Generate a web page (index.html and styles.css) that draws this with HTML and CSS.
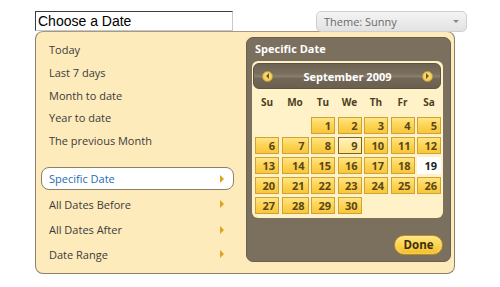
FILE: index.html
```html
<!DOCTYPE html>
<html>
<head>
<meta charset="utf-8">
<link rel="stylesheet" href="styles.css">
</head>
<body>
<div class="page">
  <div class="toprow">
    <div class="dateinput">Choose a Date</div>
    <div class="theme"><span>Theme: Sunny</span><i class="theme-arrow"></i></div>
  </div>
  <div class="popup">
    <div class="menu">
      <div class="group">
        <div class="item">Today</div>
        <div class="item">Last 7 days</div>
        <div class="item">Month to date</div>
        <div class="item">Year to date</div>
        <div class="item">The previous Month</div>
      </div>
      <div class="group group2">
        <div class="item sub active">Specific Date<i class="tri"></i></div>
        <div class="item sub">All Dates Before<i class="tri"></i></div>
        <div class="item sub">All Dates After<i class="tri"></i></div>
        <div class="item sub">Date Range<i class="tri"></i></div>
      </div>
    </div>
    <div class="panel">
      <div class="panel-title">Specific Date</div>
      <div class="cal">
        <div class="cal-head">
          <span class="nav prev"><i></i></span>
          <span class="month">September 2009</span>
          <span class="nav next"><i></i></span>
        </div>
        <div class="grid names">
          <span>Su</span><span>Mo</span><span>Tu</span><span>We</span><span>Th</span><span>Fr</span><span>Sa</span>
        </div>
        <div class="grid days">
          <span class="empty"></span><span class="empty"></span>
          <span class="d">1</span><span class="d">2</span><span class="d">3</span><span class="d">4</span><span class="d">5</span>
          <span class="d">6</span><span class="d">7</span><span class="d">8</span><span class="d sel">9</span><span class="d">10</span><span class="d">11</span><span class="d">12</span>
          <span class="d">13</span><span class="d">14</span><span class="d">15</span><span class="d">16</span><span class="d">17</span><span class="d">18</span><span class="d hover">19</span>
          <span class="d">20</span><span class="d">21</span><span class="d">22</span><span class="d">23</span><span class="d">24</span><span class="d">25</span><span class="d">26</span>
          <span class="d">27</span><span class="d">28</span><span class="d">29</span><span class="d">30</span>
        </div>
      </div>
      <div class="panel-foot">
        <div class="done">Done</div>
      </div>
    </div>
  </div>
</div>
</body>
</html>
```
FILE: styles.css
```css
* { box-sizing: border-box; }
html, body { margin: 0; padding: 0; background: #fff; }
body { font-family: "Open Sans", "Noto Sans", sans-serif; font-size: 11px; color: #3a3a3a; }
.page { padding: 11px 0 0 35px; }
.toprow { display: flex; height: 20px; align-items: flex-start; }
.dateinput {
  width: 198px; height: 20px;
  border: 1px solid #c8c8c8; border-top-color: #3c3c3c; border-left-color: #3c3c3c;
  font-family: "Liberation Sans", Arial, sans-serif; font-size: 14px; color: #000;
  line-height: 18px; padding-left: 2px;
}
.theme {
  margin-left: 83px; width: 151px; height: 21px;
  border: 1px solid #cfcfcf; border-radius: 5px;
  background: linear-gradient(#f4f4f4, #e2e2e2);
  color: #6a6a6a; font-size: 11px; line-height: 19px;
  display: flex; justify-content: space-between; align-items: center;
  padding: 0 7px 0 7px;
}
.theme-arrow {
  width: 0; height: 0;
  border-left: 3px solid transparent; border-right: 3px solid transparent;
  border-top: 3px solid #888;
}
.popup {
  width: 420px; height: 243px;
  background: #feebbb;
  border: 1px solid #8c806c; border-top-color: #a89a80;
  border-radius: 8px;
  display: flex; justify-content: space-between;
  padding: 5px 3px 0 5px;
}
.menu { width: 193px; padding-top: 1px; }
.item {
  height: 23px; line-height: 23px; padding: 0 7px;
  display: flex; justify-content: space-between; align-items: center;
  color: #3b3b3b; border: 1px solid transparent; border-radius: 8px;
}
.group .item:nth-child(4) { margin-top: -1px; }
.group2 { margin-top: 15px; display: flex; flex-direction: column; gap: 2.6px; }
.item.active { background: #fff; border-color: #8c806c; color: #1e6cb5; }
.tri {
  width: 0; height: 0; margin-right: 2px;
  border-top: 4px solid transparent; border-bottom: 4px solid transparent;
  border-left: 4px solid #e2a21e;
}
.panel {
  width: 205px; height: 225px;
  background: #7b6f5e;
  border: 1px solid #6a5f50;
  border-radius: 7px;
  padding: 0 7px 0 5px;
}
.panel-title { height: 23px; line-height: 21px; padding-left: 3px; color: #fff; font-weight: bold; font-size: 11px; }
.cal {
  background: #fff1c8; border-radius: 6px;
  padding: 2px 2px 4px 1px;
  height: 157px;
}
.cal-head {
  height: 26px; border-radius: 6px;
  background: linear-gradient(#6e6352 0%, #7a6f5e 40%, #8a7f6e 52%, #736857 60%, #6b604f 100%);
  border: 1px solid #5e5444;
  display: flex; align-items: center; justify-content: space-between;
  padding: 0 7px 0 8px;
}
.month { color: #fff; font-weight: bold; font-size: 11px; }
.nav {
  width: 11px; height: 11px; border-radius: 50%;
  background: radial-gradient(circle at 50% 40%, #ffe58a, #e9bd3e);
  border: 1px solid #caa038;
  display: flex; align-items: center; justify-content: center;
}
.nav i { width: 0; height: 0; border-top: 3px solid transparent; border-bottom: 3px solid transparent; }
.prev i { border-right: 3px solid #6a5a30; margin-left: -1px; }
.next i { border-left: 3px solid #6a5a30; margin-left: 1px; }
.grid {
  display: grid;
  grid-template-columns: 24px 27px 24px 24px 24px 24px 24px;
  column-gap: 2.5px;
  padding-left: 2px;
}
.names { height: 26px; align-items: center; margin-bottom: 2px; }
.names span { text-align: center; font-weight: bold; font-size: 10px; color: #4c3f22; }
.days { row-gap: 3px; grid-auto-rows: 17px; }
.d {
  border: 1px solid #d2a133;
  background: linear-gradient(#ffe583, #fcd250 55%, #f8c63c);
  font-weight: bold; font-size: 11px; color: #5a4619;
  text-align: right; padding-right: 3px; line-height: 15px;
}
.d.sel { border-color: #7e6428; background: linear-gradient(#fff3c0, #ffe07a); }
.d.hover { background: #fff; border-color: #fff; color: #222; }
.panel-foot { display: flex; justify-content: flex-end; padding-top: 17px; }
.done {
  width: 49px; height: 20px; border-radius: 10px;
  border: 1px solid #b38d22;
  background: linear-gradient(#ffe684, #fcd24a 55%, #f2bd2a);
  box-shadow: inset 0 0 2px #fff3b0;
  text-align: center; line-height: 18px;
  font-weight: bold; font-size: 11.5px; color: #3c2e12;
}
```
